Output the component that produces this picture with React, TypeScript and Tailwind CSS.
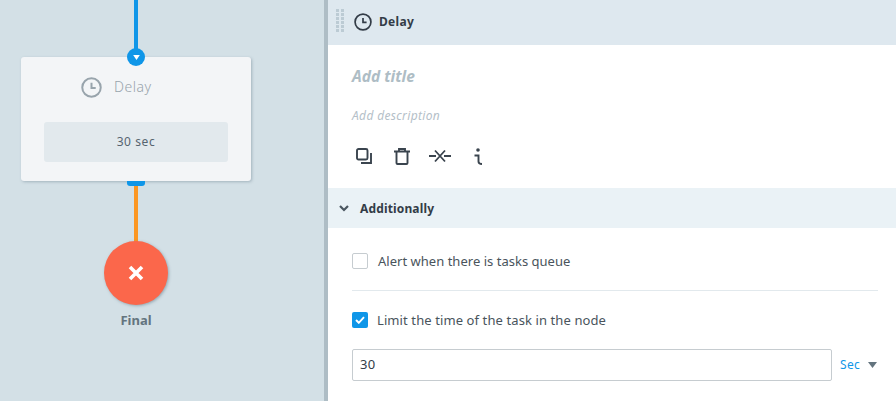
import React from 'react';

const Clock = ({ className }: { className: string }) => (
  <svg viewBox="0 0 20 20" className={className} fill="none" stroke="currentColor">
    <circle cx="10" cy="10" r="8.8" strokeWidth="1.9" />
    <path d="M10 5.5V10.5H14" strokeWidth="1.9" />
  </svg>
);

const Canvas = () => (
  <div className="relative w-[324px] h-full bg-[#d3e0e6] shrink-0 overflow-hidden">
    <div className="absolute left-[134px] top-0 w-[4px] h-[50px] bg-[#0f96e8]" />
    <div className="absolute left-[21px] top-[57px] w-[230px] h-[124px] bg-[#f3f5f7] rounded-[3px] shadow-[1px_1px_3px_rgba(90,115,130,0.4)] flex flex-col items-center">
      <div className="flex items-center self-start h-[20px] mt-[20px] ml-[60px] gap-[12px] text-[#98a4ac]">
        <Clock className="w-[21px] h-[21px]" />
        <span className="text-[14px] leading-[18px] font-light tracking-[0.5px]">Delay</span>
      </div>
      <div className="w-[184px] h-[40px] mt-[25px] bg-[#e2e9ed] rounded-[3px] flex items-center justify-center text-[12px] tracking-[0.6px] text-[#566470]">
        30 sec
      </div>
    </div>
    <div className="absolute left-[127px] top-[48px] w-[18px] h-[18px] rounded-full bg-[#0f96e8] flex items-center justify-center">
      <svg viewBox="0 0 8 6" className="w-[7px] h-[5px] mt-[1px]">
        <path d="M0 0H8L4 6Z" fill="#fff" />
      </svg>
    </div>
    <div className="absolute left-[127px] top-[181px] w-[18px] h-[5px] bg-[#0f96e8] rounded-b-[3px]" />
    <div className="absolute left-[134px] top-[186px] w-[4px] h-[56px] bg-[#fb9722]" />
    <div className="absolute left-[104px] top-[241px] w-[64px] h-[64px] rounded-full bg-[#fb674b] shadow-[1px_1px_3px_rgba(90,115,130,0.5)] flex items-center justify-center">
      <svg viewBox="0 0 18 18" className="w-[18px] h-[18px]">
        <path d="M3 3L15 15M15 3L3 15" stroke="#fff" strokeWidth="3.6" />
      </svg>
    </div>
    <div className="absolute left-[104px] top-[311px] w-[64px] text-center text-[13px] leading-[18px] font-bold text-[#63747e]">
      Final
    </div>
  </div>
);

const Toolbar = () => (
  <div className="flex items-center text-[#3a444e] mt-[22px] ml-[4px] h-[18px]">
    <svg viewBox="0 0 16 16" className="w-[16px] h-[16px]" fill="none" stroke="currentColor" strokeWidth="1.9">
      <rect x="1" y="1" width="10.5" height="10.5" rx="1.5" />
      <path d="M15 5V15H5" />
    </svg>
    <svg viewBox="0 0 16 17" className="w-[16px] h-[17px] ml-[22px]" fill="none" stroke="currentColor" strokeWidth="1.9">
      <path d="M0 3.5H16M5 3.5V1H11V3.5M2.5 3.5V15Q2.5 16 3.5 16H12.5Q13.5 16 13.5 15V3.5" />
    </svg>
    <svg viewBox="0 0 22 14" className="w-[22px] h-[14px] ml-[19px]" fill="none" stroke="currentColor" strokeWidth="1.8">
      <path d="M0 7H7M15 7H22M6 1.5L16 12.5M16 1.5L6 12.5" />
    </svg>
    <svg viewBox="0 0 10 17" className="w-[10px] h-[17px] ml-[22px]" fill="none" stroke="currentColor" strokeWidth="1.9">
      <circle cx="5" cy="2" r="1.8" fill="currentColor" stroke="none" />
      <path d="M1.5 7.5H5.5V13.5Q5.5 16 9 16" />
    </svg>
  </div>
);

const Grip = () => (
  <div className="grid grid-cols-2 gap-x-[2px] gap-y-[1px] w-[8px] mt-[-3px]">
    {Array.from({ length: 12 }).map((_, i) => (
      <span key={i} className="w-[3px] h-[3px] bg-[#bccbd4]" />
    ))}
  </div>
);

const Panel = () => (
  <div className="flex-1 h-full bg-white border-l-[4px] border-[#aebdc5] flex flex-col">
    <div className="h-[45px] bg-[#dee8ef] flex items-center pl-[8px] pb-[2px] shrink-0">
      <Grip />
      <Clock className="w-[18px] h-[18px] ml-[10px] text-[#333c47]" />
      <span className="ml-[7px] text-[12px] font-bold tracking-[0.3px] text-[#333c47]">Delay</span>
    </div>
    <div className="pl-[24px] h-[143px] shrink-0">
      <div className="mt-[20px] text-[15.5px] leading-[22px] italic font-bold text-[#aebdc5]">Add title</div>
      <div className="mt-[20px] text-[12px] leading-[18px] tracking-[0.35px] italic text-[#b4c0c8]">Add description</div>
      <Toolbar />
    </div>
    <div className="h-[40px] bg-[#eaf2f6] flex items-center pl-[11px] pt-[1px] gap-[11px] text-[#333c47] shrink-0">
      <svg viewBox="0 0 10 7" className="w-[10px] h-[7px]" fill="none" stroke="#4a5660" strokeWidth="2.2">
        <path d="M1 1L5 5L9 1" />
      </svg>
      <span className="text-[12px] font-bold tracking-[0.15px]">Additionally</span>
    </div>
    <div className="pl-[24px] pr-[18px] pt-[25px]">
      <div className="flex items-center h-[16px]">
        <span className="w-[16px] h-[16px] rounded-[2px] border border-[#c6ccd0] bg-white" />
        <span className="ml-[10px] mt-[1px] text-[13px] tracking-[0.02px] text-[#49545c]">Alert when there is tasks queue</span>
      </div>
      <div className="h-px bg-[#e2e9ed] mt-[21px]" />
      <div className="flex items-center h-[16px] mt-[21px]">
        <span className="w-[16px] h-[16px] rounded-[2px] bg-[#0f96e8] flex items-center justify-center">
          <svg viewBox="0 0 12 10" className="w-[10px] h-[8px]" fill="none" stroke="#fff" strokeWidth="2.4">
            <path d="M1 5L4.5 8.5L11 1.5" />
          </svg>
        </span>
        <span className="ml-[9px] mt-[1px] text-[13px] tracking-[0.1px] text-[#49545c]">Limit the time of the task in the node</span>
      </div>
      <div className="flex items-center mt-[21px]">
        <div className="w-[480px] h-[32px] rounded-[2px] border border-[#c6ccd0] flex items-center pl-[7px] text-[13px] tracking-[0.3px] text-[#333c47]">
          30
        </div>
        <span className="ml-[8px] text-[12px] tracking-[0.3px] text-[#0f96e8]">Sec</span>
        <svg viewBox="0 0 9 6" className="w-[9px] h-[6px] ml-[8px]">
          <path d="M0 0H9L4.5 6Z" fill="#63747e" />
        </svg>
      </div>
    </div>
  </div>
);

const App = () => {
  return (
    <div className="flex w-[896px] h-[401px] overflow-hidden font-['Noto_Sans',sans-serif]">
      <Canvas />
      <Panel />
    </div>
  );
};

export default App;
